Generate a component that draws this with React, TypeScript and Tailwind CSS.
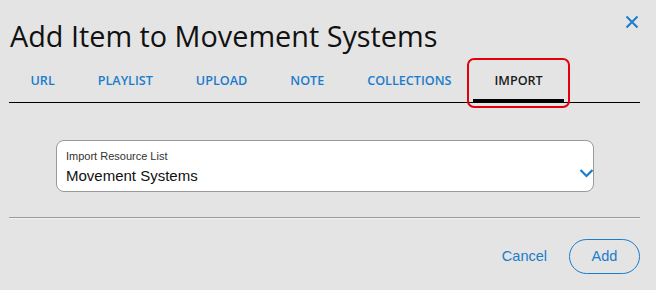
import React, { useState } from "react";

const tabs = ["URL", "PLAYLIST", "UPLOAD", "NOTE", "COLLECTIONS", "IMPORT"];

const App = () => {
  const [active, setActive] = useState("IMPORT");

  return (
    <div className="w-[656px] h-[290px] bg-[#e4e4e4] overflow-hidden">
      <div className="pl-[9px] pr-[16px] pt-[17px]">
        <div className="flex items-start justify-between">
          <h1 className="pl-[1px] text-[28.8px] leading-[38px] text-[#111] font-['Open_Sans',sans-serif]">
            Add Item to Movement Systems
          </h1>
          <button className="mt-[-2px] mr-[1px] text-[#1a7ccc]">
            <svg width="14" height="14" viewBox="0 0 14 14">
              <path
                d="M1.5 1.5 L12.5 12.5 M12.5 1.5 L1.5 12.5"
                stroke="currentColor"
                strokeWidth="2"
                fill="none"
              />
            </svg>
          </button>
        </div>

        <div className="mt-[5px] flex border-b border-black">
          {tabs.map((tab) => (
            <button
              key={tab}
              onClick={() => setActive(tab)}
              className={`relative h-[42px] px-[21.5px] text-[12.6px] font-semibold font-['Open_Sans',sans-serif] ${
                active === tab ? "text-[#1b1b1b]" : "text-[#1a7ccc]"
              }`}
            >
              {tab}
              {active === tab && (
                <>
                  <span className="absolute left-0 right-0 bottom-0 h-[3px] bg-black" />
                  <span className="absolute left-[-6px] right-[-6px] top-[-2px] bottom-[-6px] rounded-[7px] border-2 border-[#e3000b]" />
                </>
              )}
            </button>
          ))}
        </div>

        <div className="pt-[37px] pl-[47px] pr-[46px]">
          <div className="relative h-[52px] rounded-[8px] border border-[#9a9a9a] bg-white px-[9px] pt-[9px] font-['Liberation_Sans',Arial,sans-serif]">
            <div className="text-[11px] leading-[13px] text-[#333]">
              Import Resource List
            </div>
            <div className="mt-[4px] text-[15px] leading-[18px] text-[#111]">
              Movement Systems
            </div>
            <svg
              className="absolute right-[-1px] top-[27px] text-[#1a7ccc]"
              width="15"
              height="10"
              viewBox="0 0 15 10"
            >
              <path
                d="M1.5 2 L7.5 8 L13.5 2"
                stroke="currentColor"
                strokeWidth="2.2"
                fill="none"
              />
            </svg>
          </div>
        </div>

        <div className="mt-[25px] h-[2px] border-t border-[#9a9a9a] border-b border-b-[#f2f2f2]" />

        <div className="mt-[20px] flex items-center justify-end gap-[22px] font-['Liberation_Sans',Arial,sans-serif]">
          <button className="ml-[2px] text-[14.5px] text-[#1a7ccc]">Cancel</button>
          <button className="h-[35px] w-[71px] rounded-full border border-[#1a7ccc] text-[14.5px] text-[#1a7ccc]">
            Add
          </button>
        </div>
      </div>
    </div>
  );
};

export default App;
